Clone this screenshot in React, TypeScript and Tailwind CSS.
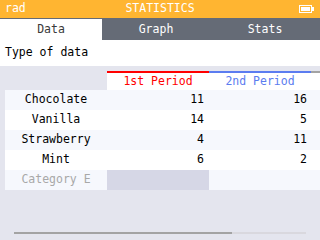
import React from "react";

type Row = { label: string; a: string; b: string };

const rows: Row[] = [
  { label: "Chocolate", a: "11", b: "16" },
  { label: "Vanilla", a: "14", b: "5" },
  { label: "Strawberry", a: "4", b: "11" },
  { label: "Mint", a: "6", b: "2" },
];

const font = { fontFamily: '"DejaVu Sans Mono", "Liberation Mono", monospace' };

export default function App() {
  return (
    <div
      className="flex h-[240px] w-[320px] flex-col overflow-hidden bg-[#e4e5ee] text-[11.5px] leading-none"
      style={font}
    >
      <div className="relative flex h-[18px] items-center justify-center bg-[#ffb531] text-white">
        <span className="absolute left-[5px]">rad</span>
        <span>STATISTICS</span>
        <Battery />
      </div>

      <div className="flex h-[22px] border-t border-[#656b76] bg-[#656b76] text-white">
        <div className="flex w-[102px] items-center justify-center bg-white text-[#3a3a3a]">Data</div>
        <div className="flex w-[108px] items-center justify-center">Graph</div>
        <div className="flex flex-1 items-center justify-center">Stats</div>
      </div>

      <div className="flex h-[26px] items-center bg-white px-[5px] text-black">Type of data</div>

      <div className="mt-[5px] flex h-[19px] pl-[107px]">
        <div className="flex w-[102px] items-center justify-center border-t-2 border-[#ff0000] bg-white text-[#ff0000]">
          1st Period
        </div>
        <div className="flex w-[102px] items-center justify-center border-t-2 border-[#5b7cf0] bg-white text-[#5b7cf0]">
          2nd Period
        </div>
        <div className="flex-1 border-t-2 border-[#a3a3a3] bg-white" />
      </div>

      <div className="flex flex-col pl-[5px] text-black">
        {rows.map((row, i) => (
          <div
            key={row.label}
            className={`flex h-[20px] items-center ${i % 2 === 0 ? "bg-[#f6f8fd]" : "bg-white"}`}
          >
            <div className="w-[102px] text-center">{row.label}</div>
            <div className="w-[102px] pr-[5px] text-right">{row.a}</div>
            <div className="w-[102px] pr-[4px] text-right">{row.b}</div>
          </div>
        ))}
        <div className="flex h-[20px] items-center bg-[#f6f8fd]">
          <div className="w-[102px] text-center text-[#a8a8a8]">Category E</div>
          <div className="h-full w-[102px] bg-[#d6d7e6]" />
        </div>
      </div>

      <div className="mt-auto mb-[6px] flex h-[2px] px-[14px]">
        <div className="w-[218px] bg-[#a3a3a3]" />
        <div className="flex-1 bg-[#d9d8de]" />
      </div>
    </div>
  );
}

function Battery() {
  return (
    <svg className="absolute right-[6px] top-[5px]" width="15" height="8" viewBox="0 0 15 8">
      <rect x="0.5" y="0.5" width="12" height="7" fill="none" stroke="white" />
      <rect x="2" y="2" width="9" height="4" fill="white" />
      <rect x="13" y="2" width="2" height="4" fill="white" />
    </svg>
  );
}
